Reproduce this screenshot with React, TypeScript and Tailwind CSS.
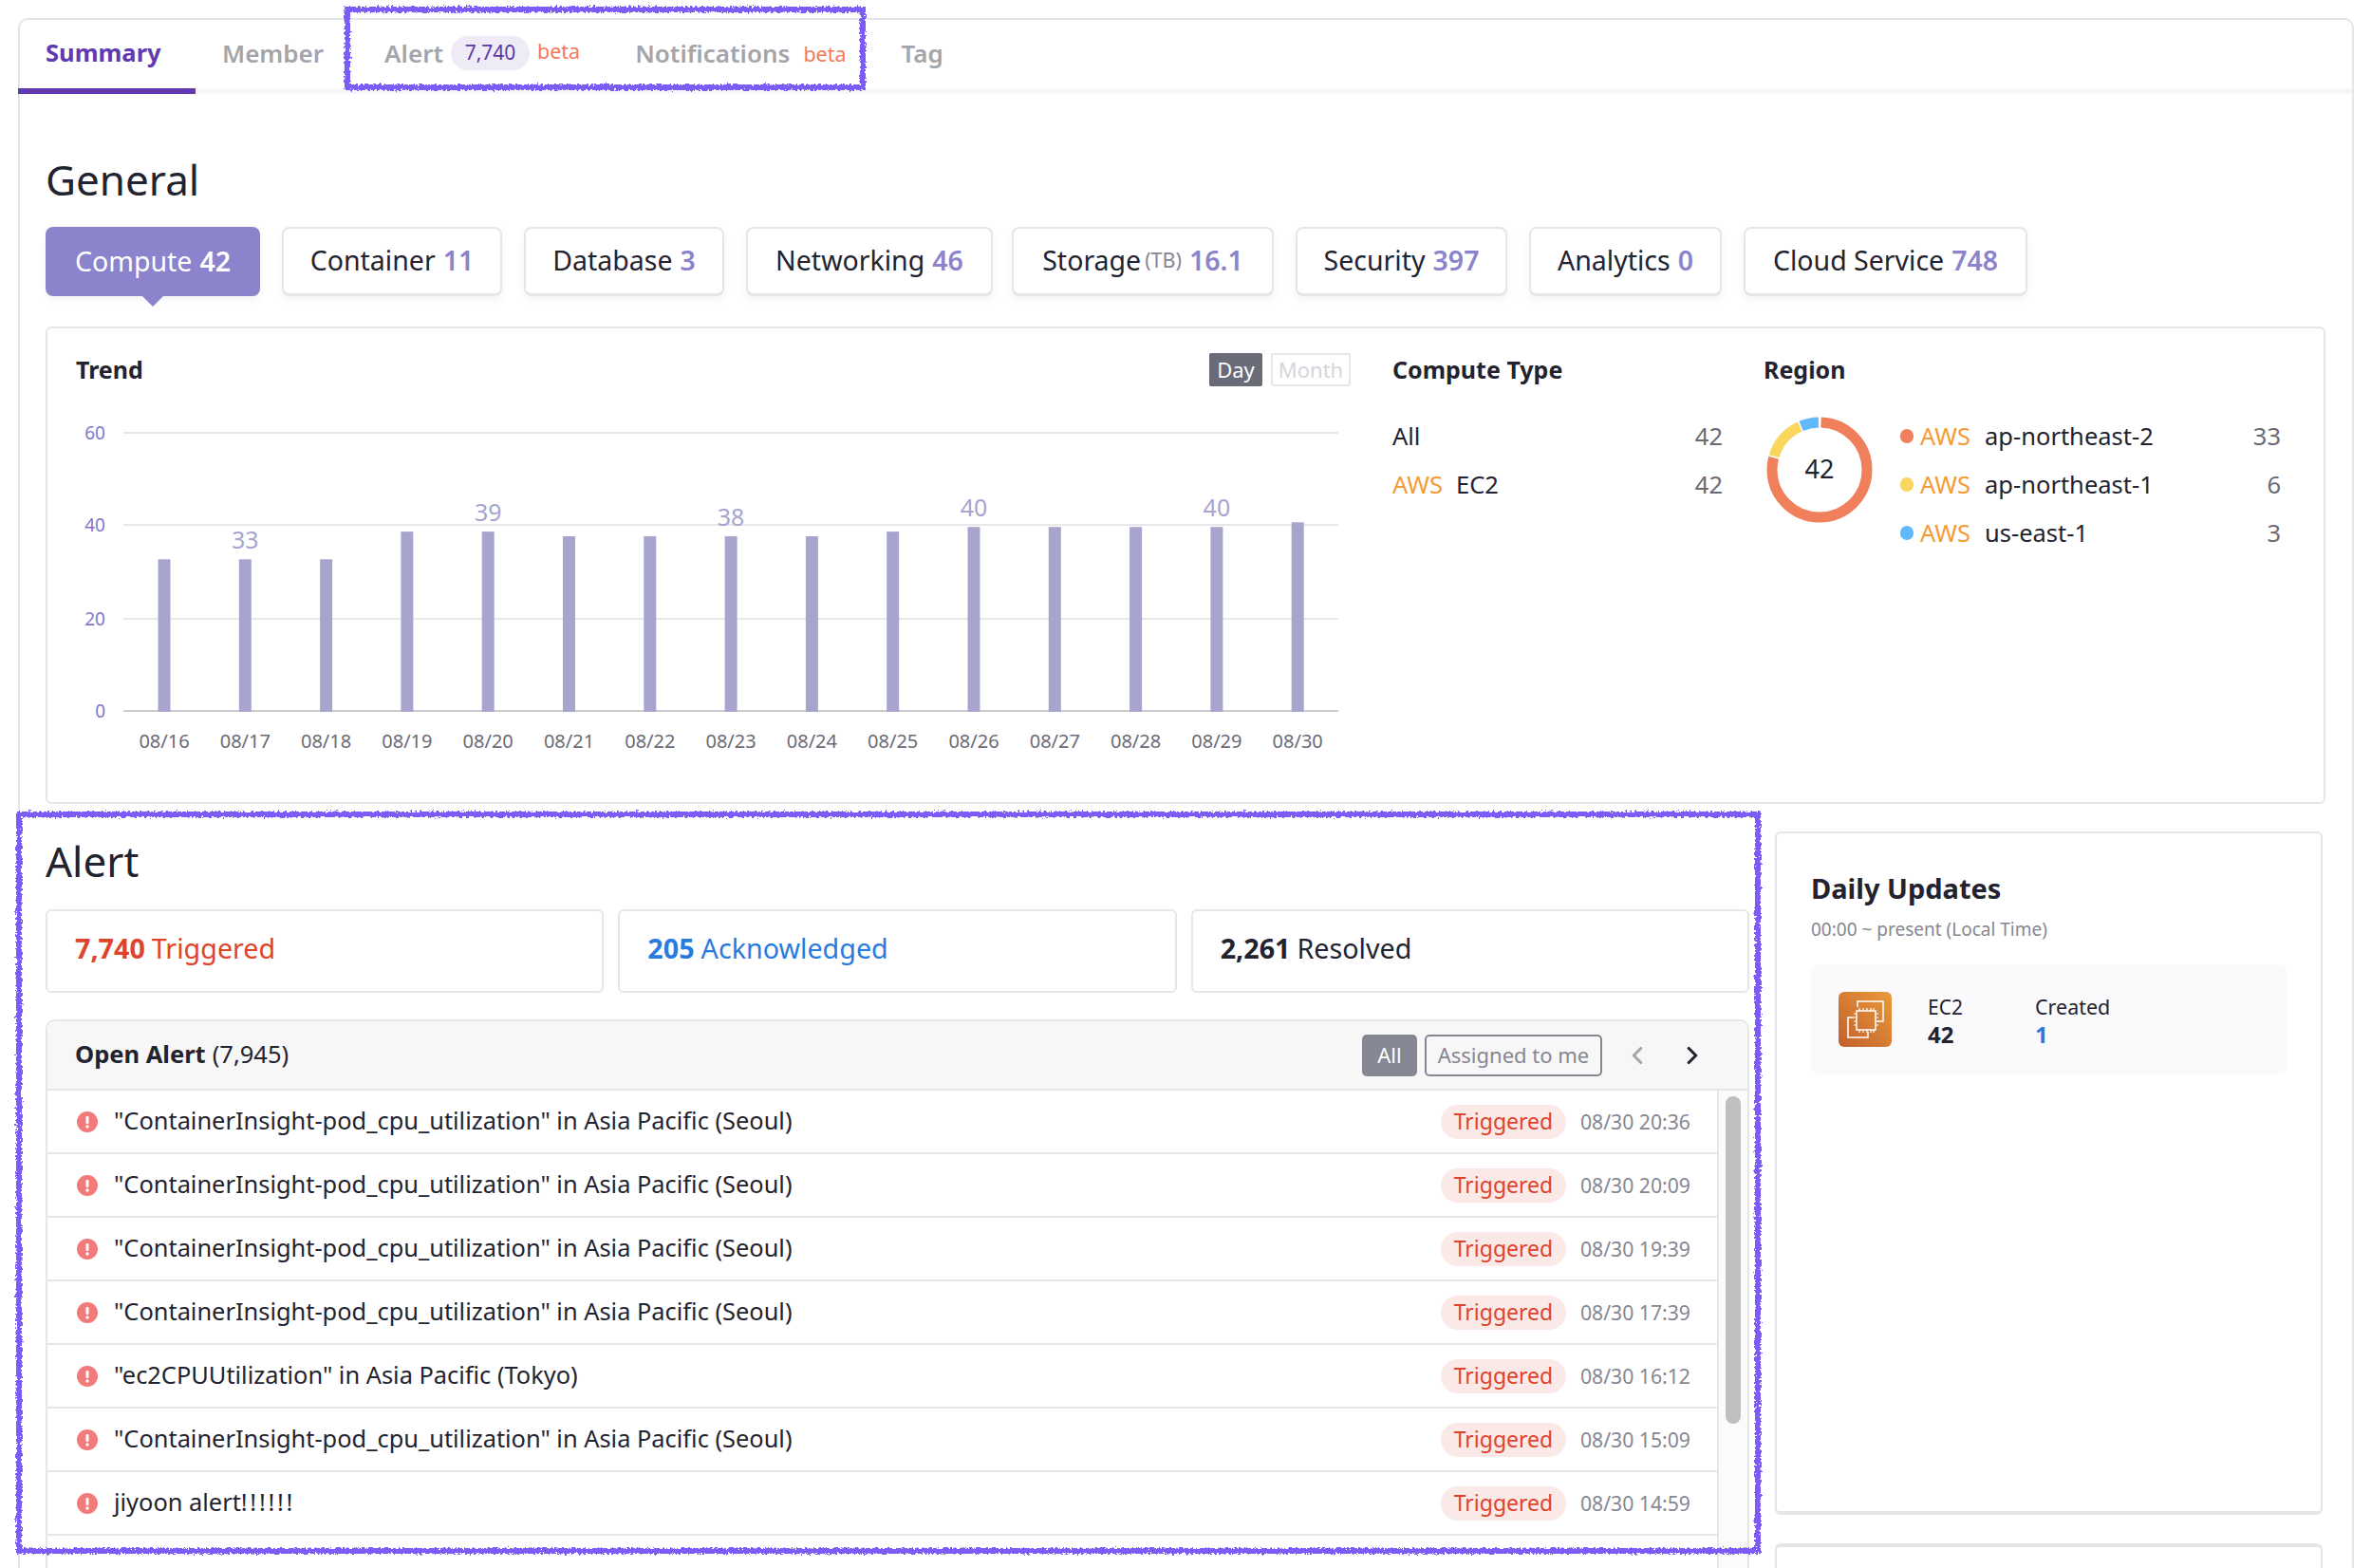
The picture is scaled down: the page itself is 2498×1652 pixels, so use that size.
import { ChevronLeft, ChevronRight } from "lucide-react";

const font = { fontFamily: '"Noto Sans", sans-serif' };

const stats = [
  { label: "Compute", unit: "", value: "42", w: "w-[226px]" },
  { label: "Container", unit: "", value: "11", w: "w-[232px]" },
  { label: "Database", unit: "", value: "3", w: "w-[211px]" },
  { label: "Networking", unit: "", value: "46", w: "w-[260px]" },
  { label: "Storage", unit: "(TB)", value: "16.1", w: "w-[276px] -ml-[3px]" },
  { label: "Security", unit: "", value: "397", w: "w-[223px]" },
  { label: "Analytics", unit: "", value: "0", w: "w-[203px]" },
  { label: "Cloud Service", unit: "", value: "748", w: "w-[299px]" },
];

const bars = [33, 33, 33, 39, 39, 38, 38, 38, 38, 39, 40, 40, 40, 40, 41];
const shown: Record<number, number> = { 1: 33, 4: 39, 7: 38, 10: 40, 13: 40 };

const alerts = [
  ['"ContainerInsight-pod_cpu_utilization" in Asia Pacific (Seoul)', "08/30 20:36"],
  ['"ContainerInsight-pod_cpu_utilization" in Asia Pacific (Seoul)', "08/30 20:09"],
  ['"ContainerInsight-pod_cpu_utilization" in Asia Pacific (Seoul)', "08/30 19:39"],
  ['"ContainerInsight-pod_cpu_utilization" in Asia Pacific (Seoul)', "08/30 17:39"],
  ['"ec2CPUUtilization" in Asia Pacific (Tokyo)', "08/30 16:12"],
  ['"ContainerInsight-pod_cpu_utilization" in Asia Pacific (Seoul)', "08/30 15:09"],
  ["jiyoon alert!!!!!!", "08/30 14:59"],
];

function Trend() {
  return (
    <svg width="1370" height="450" viewBox="0 0 1370 450" className="absolute left-0 top-[78px]" style={font}>
      {[32, 129, 228].map((p) => (
        <line key={p} x1="80" x2="1360" y1={p} y2={p} stroke="#e8e8ea" strokeWidth="2" />
      ))}
      <line x1="80" x2="1360" y1="325" y2="325" stroke="#c9c9ce" strokeWidth="2" />
      {[["60", 32], ["40", 129], ["20", 228], ["0", 325]].map(([t, p]) => (
        <text key={t} x="61" y={Number(p) + 7} textAnchor="end" fontSize="19" fill="#8078cc">{t}</text>
      ))}
      {bars.map((v, i) => {
        const cx = 123 + i * 85.3;
        const top = 326 - v * 4.87;
        return (
          <g key={i}>
            <rect x={cx - 6.5} y={top} width="13" height={326 - top} fill="#a7a5cd" />
            <text x={cx} y="364" textAnchor="middle" fontSize="20" fill="#6a6b76">{`08/${16 + i}`}</text>
            {shown[i] !== undefined && (
              <text x={cx} y={top - 11} textAnchor="middle" fontSize="25" fill="#a7a5cd">{shown[i]}</text>
            )}
          </g>
        );
      })}
    </svg>
  );
}

function Donut() {
  const r = 50;
  const c = 2 * Math.PI * r;
  const segs = [
    { from: 0.005, to: 0.79, color: "#f07f5c" },
    { from: 0.795, to: 0.93, color: "#f8d75c" },
    { from: 0.935, to: 0.995, color: "#62b8fa" },
  ];
  return (
    <svg width="112" height="112" viewBox="0 0 112 112" className="block">
      {segs.map((s) => (
        <circle
          key={s.color}
          cx="56"
          cy="56"
          r={r}
          fill="none"
          stroke={s.color}
          strokeWidth="11"
          strokeDasharray={`${(s.to - s.from) * c} ${c}`}
          strokeDashoffset={-s.from * c}
          transform="rotate(-90 56 56)"
        />
      ))}
      <text x="56" y="65" textAnchor="middle" fontSize="27" fill="#22232f" style={font}>42</text>
    </svg>
  );
}

function AlertIcon() {
  return (
    <svg width="22" height="22" viewBox="0 0 22 22" className="shrink-0">
      <circle cx="11" cy="11" r="11" fill="#f27a7a" />
      <rect x="9.5" y="5" width="3" height="8" rx="1.2" fill="#fff" />
      <circle cx="11" cy="16" r="1.7" fill="#fff" />
    </svg>
  );
}

function Ec2Icon() {
  return (
    <svg width="56" height="58" viewBox="0 0 56 58" className="shrink-0">
      <defs>
        <linearGradient id="ec2g" x1="0" y1="1" x2="1" y2="0">
          <stop offset="0" stopColor="#c2602c" />
          <stop offset="1" stopColor="#ea9a3a" />
        </linearGradient>
      </defs>
      <rect width="56" height="58" rx="6" fill="url(#ec2g)" />
      <g fill="none" stroke="#fff" strokeWidth="1.5">
        <path d="M20 16V10H47V31H41" />
        <path d="M16 27H10V48H31V42" />
        <rect x="19" y="20" width="20" height="20" />
        <path d="M22 17v3M26 17v3M30 17v3M34 17v3M37 17v3M22 40v3M26 40v3M30 40v3M34 40v3M37 40v3M16 23h3M16 27h3M16 31h3M16 35h3M39 23h3M39 27h3M39 31h3M39 35h3" strokeWidth="1.2" />
      </g>
    </svg>
  );
}

function Scribbles() {
  return (
    <svg width="2498" height="1652" className="pointer-events-none absolute left-0 top-0">
      <defs>
        <filter id="rough" x="-2%" y="-2%" width="104%" height="104%">
          <feTurbulence type="fractalNoise" baseFrequency="0.4" numOctaves="2" seed="4" />
          <feDisplacementMap in="SourceGraphic" scale="6" />
        </filter>
      </defs>
      <g fill="none" stroke="#7b5cf6" strokeWidth="6" filter="url(#rough)">
        <rect x="366" y="10" width="543" height="82" />
        <rect x="20" y="858" width="1832" height="776" />
      </g>
    </svg>
  );
}

const tabBase = "flex h-[70px] items-center text-[26px] font-semibold text-[#a3a5ab]";

export default function App() {
  return (
    <div className="relative h-[1652px] w-[2498px] overflow-hidden bg-white" style={font}>
      <div className="ml-[19px] mt-[19px] h-[1700px] w-[2461px] rounded-t-[10px] border-2 border-[#e6e6e8] text-[#22232f]">
        {/* Tabs */}
        <div className="flex h-[78px] border-b-[6px] border-[#f7f7f7]">
          <div className="-mb-[6px] -ml-[2px] flex h-[78px] w-[187px] items-center border-b-[6px] border-[#6139b0] pb-[4px] pl-[29px] text-[25.5px] font-bold text-[#6139b0]">Summary</div>
          <div className={`${tabBase} ml-[28px]`}>Member</div>
          <div className={`${tabBase} ml-[64px]`}>
            Alert
            <span className="ml-[8px] flex h-[36px] w-[83px] items-center justify-center rounded-full bg-[#eeebf7] text-[21px] font-normal text-[#5a37a5]">7,740</span>
            <span className="ml-[8px] -mt-[4px] text-[21.5px] font-normal text-[#f2795a]">beta</span>
          </div>
          <div className={`${tabBase} ml-[58px]`}>
            Notifications
            <span className="ml-[14px] mt-[2px] text-[21.5px] font-normal text-[#f2795a]">beta</span>
          </div>
          <div className={`${tabBase} ml-[58px]`}>Tag</div>
        </div>

        <div className="pl-[27px]">
          <h1 className="mt-[60px] h-[60px] text-[44px] leading-[60px] font-normal">General</h1>

          <div className="mt-[20px] flex h-[73px] gap-[23px]">
            {stats.map((s, i) => (
              <div
                key={s.label}
                className={`relative flex ${s.w} items-center justify-center rounded-[8px] pb-[1px] text-[28.5px] shadow-[0_4px_10px_rgba(0,0,0,0.05)] ${
                  i === 0 ? "bg-[#8b83cb] text-white" : "border-2 border-b-[3px] border-[#e6e6e8] bg-white"
                }`}
              >
                <span>{s.label}</span>
                {s.unit && <span className="ml-[4px] text-[21.5px] text-[#858793]">{s.unit}</span>}
                <span className={`ml-[8px] font-semibold ${i === 0 ? "text-white" : "text-[#8b83cb]"}`}>{s.value}</span>
                {i === 0 && <span className="absolute left-[101px] top-[72px] h-0 w-0 border-x-[12px] border-t-[12px] border-x-transparent border-t-[#8b83cb]" />}
              </div>
            ))}
          </div>

          {/* Trend card */}
          <div className="relative mt-[32px] h-[503px] w-[2402px] rounded-[6px] border-2 border-[#e6e6e8]">
            <Trend />
            <div className="relative flex h-full">
              <div className="w-[1417px] pl-[30px] pt-[25px]">
                <div className="flex items-center justify-between pr-[44px]">
                  <span className="text-[25px] font-bold">Trend</span>
                  <div className="flex gap-[9px] text-[22px]">
                    <span className="flex h-[35px] w-[56px] items-center justify-center rounded-[2px] bg-[#6a6b78] text-white">Day</span>
                    <span className="flex h-[35px] w-[84px] items-center justify-center rounded-[2px] border-2 border-[#e8e8ea] text-[#d5d5da]">Month</span>
                  </div>
                </div>
              </div>
              <div className="w-[348px] pt-[25px]">
                <div className="text-[25px] font-bold">Compute Type</div>
                <div className="mt-[25px] flex h-[51px] items-center justify-between text-[25.5px]">
                  <span>All</span>
                  <span className="text-[#6a6b76]">42</span>
                </div>
                <div className="flex h-[51px] items-center justify-between text-[25.5px]">
                  <span>
                    <span className="mr-[14px] text-[#f49b32]">AWS</span>EC2
                  </span>
                  <span className="text-[#6a6b76]">42</span>
                </div>
              </div>
              <div className="ml-[43px] w-[545px] pt-[25px]">
                <div className="text-[25px] font-bold">Region</div>
                <div className="mt-[20px] flex">
                  <div className="ml-[3px] mt-[10px]">
                    <Donut />
                  </div>
                  <div className="ml-[29px] mt-[5px] w-[402px]">
                    {[
                      ["#f07f5c", "ap-northeast-2", "33"],
                      ["#f8d75c", "ap-northeast-1", "6"],
                      ["#62b8fa", "us-east-1", "3"],
                    ].map(([c, n, v]) => (
                      <div key={n} className="flex h-[51px] items-center text-[25.5px]">
                        <span className="h-[15px] w-[14px] rounded-full" style={{ backgroundColor: c }} />
                        <span className="ml-[7px] w-[68px] text-[#f49b32]">AWS</span>
                        <span className="flex-1">{n}</span>
                        <span className="text-[#6a6b76]">{v}</span>
                      </div>
                    ))}
                  </div>
                </div>
              </div>
            </div>
          </div>

          {/* Bottom */}
          <div className="flex">
            <div className="w-[1795px]">
              <h2 className="mt-[30px] h-[60px] text-[44px] leading-[60px] font-normal">Alert</h2>
              <div className="mt-[21px] flex gap-[15px]">
                <div className="flex h-[88px] flex-1 items-center rounded-[6px] border-2 border-[#e6e6e8] pb-[7px] pl-[29px] text-[28.7px] text-[#e0432b]">
                  <b className="mr-[7px] font-bold">7,740</b>Triggered
                </div>
                <div className="flex h-[88px] flex-1 items-center rounded-[6px] border-2 border-[#e6e6e8] pb-[7px] pl-[29px] text-[28.7px] text-[#2a7be0]">
                  <b className="mr-[7px] font-bold">205</b>Acknowledged
                </div>
                <div className="flex h-[88px] flex-1 items-center rounded-[6px] border-2 border-[#e6e6e8] pb-[7px] pl-[29px] text-[28.7px]">
                  <b className="mr-[7px] font-bold">2,261</b>Resolved
                </div>
              </div>
              <div className="mt-[28px] rounded-t-[10px] border-x-2 border-t-2 border-[#e6e6e8]">
                <div className="flex h-[73px] items-center rounded-t-[10px] border-b-2 border-[#e6e6e8] bg-[#f7f7f7] pl-[29px] pr-[43px]">
                  <span className="pb-[2px] text-[25.5px] font-bold">Open Alert</span>
                  <span className="ml-[7px] flex-1 pb-[2px] text-[25.5px]">(7,945)</span>
                  <span className="flex h-[44px] w-[58px] items-center justify-center rounded-[5px] bg-[#858793] text-[22px] text-white">All</span>
                  <span className="ml-[8px] flex h-[44px] w-[187px] items-center justify-center rounded-[5px] border-2 border-[#858793] text-[22px] text-[#858793]">Assigned to me</span>
                  <ChevronLeft className="ml-[22px] h-[30px] w-[30px] text-[#a3a5ab]" strokeWidth={2.5} />
                  <ChevronRight className="ml-[28px] h-[30px] w-[30px] text-[#22232f]" strokeWidth={2.5} />
                </div>
                <div className="flex">
                  <div className="w-[1761px] border-r-2 border-[#e6e6e8]">
                    {alerts.map(([t, d], i) => (
                      <div key={i} className="flex h-[67px] items-center border-b-[2px] border-[#e6e6e8] pl-[31px] pr-[28px]">
                        <AlertIcon />
                        <span className="ml-[17px] flex-1 pb-[2px] text-[25.4px]">
                          {t.endsWith("!!!!!!") ? (
                            <>
                              jiyoon alert<span className="tracking-[2.7px]">!!!!!!</span>
                            </>
                          ) : (
                            t
                          )}
                        </span>
                        <span className="-ml-[1px] mr-[1px] flex h-[36px] w-[132px] items-center justify-center rounded-full bg-[#fbe9e7] text-[23px] text-[#e0432b]">Triggered</span>
                        <span className="ml-[14px] text-[21.2px] text-[#858793]">{d}</span>
                      </div>
                    ))}
                    <div className="h-[60px]" />
                  </div>
                  <div className="flex-1 bg-[#fbfbfb] pl-[7px] pt-[6px]">
                    <div className="h-[345px] w-[16px] rounded-full bg-[#bfbfbf]" />
                  </div>
                </div>
              </div>
            </div>

            <div className="ml-[27px] w-[577px]">
              <div className="mt-[29px] h-[720px] rounded-[6px] border-2 border-b-[4px] border-[#e6e6e8] pl-[36px] pt-[38px]">
                <div className="text-[29px] leading-[40px] font-bold">Daily Updates</div>
                <div className="mt-[9px] text-[19px] text-[#858793]">00:00 ~ present (Local Time)</div>
                <div className="mt-[22px] flex h-[116px] w-[501px] items-center rounded-[8px] bg-[#fafafc] pl-[29px]">
                  <Ec2Icon />
                  <div className="ml-[38px] mt-[4px] w-[113px]">
                    <div className="text-[21px] leading-[28px]">EC2</div>
                    <div className="text-[24px] leading-[30px] font-bold">42</div>
                  </div>
                  <div className="mt-[4px]">
                    <div className="text-[21.5px] leading-[28px]">Created</div>
                    <div className="text-[24px] leading-[30px] font-bold text-[#2a7be0]">1</div>
                  </div>
                </div>
              </div>
              <div className="mt-[30px] h-[100px] rounded-[6px] border-2 border-t-[4px] border-[#e6e6e8]" />
            </div>
          </div>
        </div>
      </div>
      <Scribbles />
    </div>
  );
}
